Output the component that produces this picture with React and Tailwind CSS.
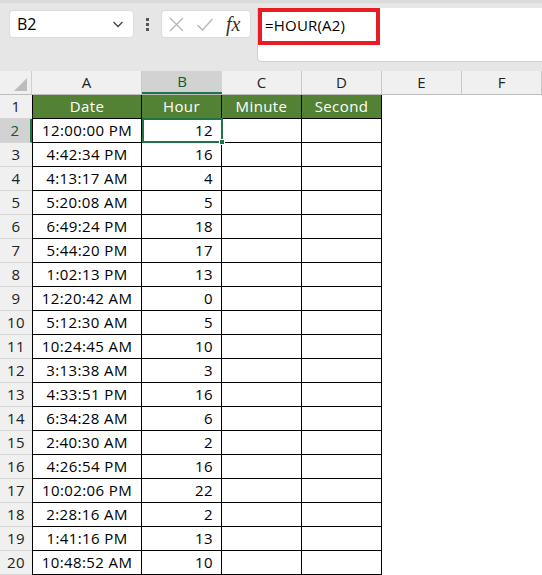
import React from 'react';

const rows = [
  ['12:00:00 PM', 12],
  ['4:42:34 PM', 16],
  ['4:13:17 AM', 4],
  ['5:20:08 AM', 5],
  ['6:49:24 PM', 18],
  ['5:44:20 PM', 17],
  ['1:02:13 PM', 13],
  ['12:20:42 AM', 0],
  ['5:12:30 AM', 5],
  ['10:24:45 AM', 10],
  ['3:13:38 AM', 3],
  ['4:33:51 PM', 16],
  ['6:34:28 AM', 6],
  ['2:40:30 AM', 2],
  ['4:26:54 PM', 16],
  ['10:02:06 PM', 22],
  ['2:28:16 AM', 2],
  ['1:41:16 PM', 13],
  ['10:48:52 AM', 10],
];

const cols = [
  { key: 'A', w: 'w-[110px]' },
  { key: 'B', w: 'w-[80px]' },
  { key: 'C', w: 'w-[80px]' },
  { key: 'D', w: 'w-[80px]' },
  { key: 'E', w: 'w-[80px]' },
  { key: 'F', w: 'w-[80px]' },
];

const font = { fontFamily: '"Open Sans", "Liberation Sans", sans-serif' };

const App = () => {
  return (
    <div className="w-[542px] h-[575px] overflow-hidden bg-white text-black" style={font}>
      {/* ribbon / formula bar */}
      <div className="h-[71px] bg-[#e6e6e6] border-t-[3px] border-[#dadada] relative">
        <div className="flex items-start pt-[7px]">
          <div className="ml-[9px] w-[125px] h-[28px] bg-white rounded-[4px] border border-[#dcdcdc] flex items-center justify-between pl-[7px] pr-[8px]">
            <span className="text-[16px] leading-none">B2</span>
            <svg width="14" height="14" viewBox="0 0 14 14" fill="none" stroke="#444" strokeWidth="1.3">
              <path d="M2.5 5 L7 9.5 L11.5 5" />
            </svg>
          </div>
          <div className="w-[27px] h-[28px] flex flex-col items-center justify-center gap-[2px]">
            <span className="w-[3px] h-[3px] bg-[#555]" />
            <span className="w-[3px] h-[3px] bg-[#555]" />
            <span className="w-[3px] h-[3px] bg-[#555]" />
          </div>
          <div className="w-[90px] h-[28px] bg-white rounded-[4px] border border-[#dcdcdc] flex items-center pl-[6px]">
            <svg width="17" height="17" viewBox="0 0 17 17" fill="none" stroke="#b5b5b5" strokeWidth="1.3">
              <path d="M2 2 L15 15 M15 2 L2 15" />
            </svg>
            <svg className="ml-[11px]" width="18" height="17" viewBox="0 0 18 17" fill="none" stroke="#b5b5b5" strokeWidth="1.3">
              <path d="M1.5 9 L6.5 14 L16.5 3" />
            </svg>
            <span className="ml-[12px] text-[20px] leading-none italic text-[#333]" style={{ fontFamily: '"Liberation Serif", serif' }}>fx</span>
          </div>
          <div className="ml-[6px] flex-1 h-[54px] -mt-[2px] bg-white rounded-bl-[5px] border-l border-b border-[#d0d0d0] relative">
            <div className="absolute left-0 top-0 w-[122px] h-[37px] border-[4px] border-[#e81c25]" />
            <span className="absolute left-[7px] top-[7px] text-[15px] leading-[20px] tracking-[0.2px]">=HOUR(A2)</span>
          </div>
        </div>
      </div>

      {/* column headers */}
      <div className="flex h-[24px] bg-[#f0f0f0] border-b border-[#bdbdbd]">
        <div className="w-[32px] h-full relative border-r border-[#cfcfcf]">
          <svg className="absolute right-[4px] bottom-[3px]" width="13" height="13" viewBox="0 0 13 13">
            <path d="M13 0 L13 13 L0 13 Z" fill="#bdbdbd" />
          </svg>
        </div>
        {cols.map((c) =>
          c.key === 'B' ? (
            <div key={c.key} className={`${c.w} h-full bg-[#d2d2d2] border-b-2 border-[#217346] flex items-center justify-center text-[15px] text-[#0e5c2f]`}>
              {c.key}
            </div>
          ) : (
            <div key={c.key} className={`${c.w} h-full border-r border-[#c8c8c8] flex items-center justify-center text-[15px] text-[#222]`}>
              {c.key}
            </div>
          )
        )}
      </div>

      {/* grid */}
      <div className="relative text-[15px] tracking-[0.4px]">
        <div className="flex h-[24px]">
          <div className="w-[32px] h-full bg-[#f0f0f0] border-b border-[#d6d6d6] flex items-center justify-center text-[#222]">1</div>
          {['Date', 'Hour', 'Minute', 'Second'].map((t, i) => (
            <div
              key={t}
              className={`${i === 0 ? 'w-[110px] border-l' : 'w-[80px]'} h-full bg-[#548235] border-r border-b border-black flex items-center justify-center text-white`}
            >
              {t}
            </div>
          ))}
        </div>
        {rows.map(([d, h], i) => {
          const sel = i === 0;
          return (
            <div key={i} className="flex h-[24px]">
              <div
                className={`w-[32px] h-full border-b border-[#d6d6d6] flex items-center justify-center ${
                  sel ? 'bg-[#d2d2d2] text-[#0e5c2f] border-r-2 border-r-[#217346]' : 'bg-[#f0f0f0] text-[#222]'
                }`}
              >
                {i + 2}
              </div>
              <div className="w-[110px] h-full border-l border-r border-b border-black flex items-center justify-center">{d}</div>
              <div className="w-[80px] h-full border-r border-b border-black flex items-center justify-end pr-[8px]">{h}</div>
              <div className="w-[80px] h-full border-r border-b border-black" />
              <div className="w-[80px] h-full border-r border-b border-black" />
            </div>
          );
        })}
        {/* selection B2 */}
        <div className="absolute left-[142px] top-[23px] w-[81px] h-[25px] border-2 border-[#217346] pointer-events-none" />
        <div className="absolute left-[219px] top-[44px] w-[6px] h-[6px] bg-[#217346] border border-white" />
      </div>
    </div>
  );
};

export default App;
